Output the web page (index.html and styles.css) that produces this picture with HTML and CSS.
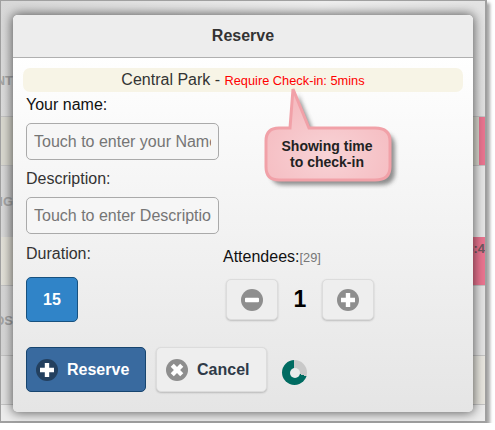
FILE: index.html
```html
<!DOCTYPE html>
<html lang="en">
<head>
  <meta charset="UTF-8">
  <meta name="viewport" content="width=device-width, initial-scale=1.0">
  <title>Reserve</title>
  <link rel="stylesheet" href="styles.css">
</head>
<body>
  <div class="screen">
    <div class="backdrop">
      <div class="band band-top"><span class="band-left">NT</span></div>
      <div class="band band-cream"><span class="band-left"></span><span class="band-pink"></span></div>
      <div class="band band-photo"><span class="band-left">NG</span></div>
      <div class="band band-time"><span class="band-left"></span><span class="band-pink">5:4</span></div>
      <div class="band band-photo-low"><span class="band-left">OS</span></div>
      <div class="band band-cream-low"></div>
      <div class="band band-foot"></div>
    </div>

    <div class="dialog">
      <header class="dialog-title">Reserve</header>
      <div class="dialog-body">
        <div class="banner">Central Park - <span class="banner-note">Require Check-in: 5mins</span></div>

        <label class="field-label label-name" for="name">Your name:</label>
        <input class="text-input" id="name" type="text" placeholder="Touch to enter your Name">
        <label class="field-label" for="description">Description:</label>
        <input class="text-input" id="description" type="text" placeholder="Touch to enter Description">

        <div class="options">
          <div class="option-duration">
            <div class="field-label">Duration:</div>
            <button class="duration-btn" type="button">15</button>
          </div>
          <div class="option-attendees">
            <div class="field-label attendees-label">Attendees:<span class="attendees-max">[29]</span></div>
            <div class="stepper">
              <button class="step-btn" type="button">
                <svg class="icon" viewBox="0 0 22 22"><circle cx="11" cy="11" r="11" fill="#8e8e8e"/><rect x="4" y="8.800" width="14" height="4.400" rx="1" fill="#fff"/></svg>
              </button>
              <span class="step-value">1</span>
              <button class="step-btn" type="button">
                <svg class="icon" viewBox="0 0 22 22"><circle cx="11" cy="11" r="11" fill="#8e8e8e"/><path d="M8.800 4h4.400v4.800H18v4.400h-4.800V18H8.800v-4.800H4V8.800h4.800z" fill="#fff"/></svg>
              </button>
            </div>
          </div>
        </div>

        <div class="actions">
          <button class="action-btn action-primary" type="button">
            <svg class="icon" viewBox="0 0 22 22"><circle cx="11" cy="11" r="11" fill="#23405f"/><path d="M8.800 4h4.400v4.800H18v4.400h-4.800V18H8.800v-4.800H4V8.800h4.800z" fill="#fff"/></svg>
            Reserve
          </button>
          <button class="action-btn action-cancel" type="button">
            <svg class="icon" viewBox="0 0 22 22"><circle cx="11" cy="11" r="11" fill="#8e8e8e"/><path d="M7.800 4.700 11 7.900l3.200-3.200 3.100 3.100-3.200 3.200 3.200 3.200-3.100 3.100-3.200-3.200-3.200 3.200-3.100-3.100 3.200-3.200-3.200-3.200z" fill="#fff"/></svg>
            Cancel
          </button>
          <div class="spinner"></div>
        </div>
      </div>
    </div>

    <div class="callout">
      <svg class="callout-shape" viewBox="0 0 135 102">
        <defs>
          <radialGradient id="calloutFill" cx="0.5" cy="0.72" r="0.6">
            <stop offset="0" stop-color="#f8d3d6"/>
            <stop offset="1" stop-color="#f5bcc1"/>
          </radialGradient>
          <filter id="calloutBlur"><feGaussianBlur stdDeviation="2"/></filter>
        </defs>
        <path d="M29 2 L45 41 H111 Q126 41 126 54 V80 Q126 93 111 93 H15 Q2 93 2 80 V54 Q2 41 15 41 H26 Z" fill="#4a4a4a" opacity="0.6" transform="translate(5 5)" filter="url(#calloutBlur)"/>
        <path d="M29 2 L45 41 H111 Q126 41 126 54 V80 Q126 93 111 93 H15 Q2 93 2 80 V54 Q2 41 15 41 H26 Z" fill="url(#calloutFill)" stroke="#f1a1a8" stroke-width="3"/>
      </svg>
      <div class="callout-text">Showing time<br>to check-in</div>
    </div>
  </div>
</body>
</html>
```

FILE: styles.css
```css
body {
  margin: 0;
  background-color: #fff;
  font-family: "Liberation Sans", Arial, sans-serif;
  font-size: 16px;
  color: #222;
}
button {
  font-family: inherit;
  cursor: pointer;
}

/* the page that sits dimmed behind the dialog */
.screen {
  position: relative;
  box-sizing: border-box;
  width: 487px;
  height: 423px;
  padding: 14px 0 0 12px;
  border: 1px solid #a0a0a0;
  border-width: 1px 2px 2px 1px;
  background-color: #e4e4e4;
  box-shadow: 3px 3px 3px rgba(0, 0, 0, 0.35);
}
.backdrop {
  position: absolute;
  inset: 0;
  display: flex;
  flex-direction: column;
  overflow: hidden;
}
.band {
  display: flex;
  justify-content: space-between;
  border-bottom: 1px solid #c4c4c4;
  box-sizing: border-box;
}
.band-left {
  width: 12px;
  overflow: hidden;
  direction: rtl;
  font-size: 13px;
  font-weight: bold;
  color: #a5a5a5;
  white-space: nowrap;
}
.band-pink {
  width: 6px;
  background-color: #ea7590;
  font-size: 13px;
  font-weight: bold;
  color: #6e5a60;
  overflow: hidden;
  direction: rtl;
  white-space: nowrap;
}
.band-top {
  height: 116px;
  align-items: flex-end;
  padding-bottom: 28px;
  background: linear-gradient(115deg, #d8d8d8, #eeeeee 60%, #e0e0e0);
}
.band-top .band-left {
  line-height: 15px;
}
.band-cream {
  height: 49px;
  background-color: #d9d8cf;
}
.band-photo {
  height: 71px;
  align-items: center;
  border-bottom: none;
  background: linear-gradient(90deg, #dadada, #c8c8c8 14px, #e6e6e6 14px);
}
.band-time {
  height: 49px;
  background: linear-gradient(90deg, #e2e0d8, #dedcd3 14px);
}
.band-time .band-pink {
  width: 13px;
  line-height: 24px;
}
.band-photo-low {
  height: 70px;
  align-items: center;
  background: linear-gradient(90deg, #d4d4d4, #e8e8e8 14px, #e4e4e4 14px);
}
.band-cream-low {
  height: 49px;
  background: linear-gradient(90deg, #e0e0e0, #e8e6df);
}
.band-foot {
  flex: 1;
  border-bottom: none;
  background-color: #ececec;
}

.dialog {
  position: relative;
  box-sizing: border-box;
  width: 460px;
  height: 397px;
  border-radius: 5px;
  background: linear-gradient(180deg, #ffffff 10%, #e5e5e5 100%);
  box-shadow: 0 0 11px 1px rgba(0, 0, 0, 0.6);
  overflow: hidden;
}
.dialog-title {
  box-sizing: border-box;
  height: 43px;
  line-height: 41px;
  border-bottom: 1px solid #b0b0b0;
  background-color: #ededed;
  text-align: center;
  font-weight: bold;
  color: #333;
}
.dialog-body {
  padding: 10px 10px 0;
}
.banner {
  height: 24px;
  line-height: 24px;
  border-radius: 7px;
  background-color: #f7f4e6;
  text-align: center;
  color: #333;
}
.banner-note {
  font-size: 12.8px;
  color: #f00;
}
.field-label {
  display: block;
  line-height: 20px;
  margin-left: 3px;
  color: #333;
}
.label-name {
  margin-top: 3px;
  color: #111;
}
.text-input {
  display: block;
  box-sizing: border-box;
  width: 193px;
  height: 37px;
  margin: 8px 0 0 3px;
  padding: 0 7px;
  border: 1px solid #aaa;
  border-radius: 5px;
  background-color: #f6f6f6;
  font-family: inherit;
  font-size: 16px;
}
.text-input + .field-label {
  margin-top: 9px;
}
.text-input::placeholder {
  color: #757575;
  opacity: 1;
}

.options {
  display: flex;
  margin-top: 10px;
}
.option-duration {
  width: 200px;
}
.duration-btn {
  display: block;
  width: 52px;
  height: 45px;
  margin: 13px 0 0 3px;
  border: 1px solid #17517f;
  border-radius: 5px;
  background-color: #3084c8;
  color: #fff;
  font-size: 16px;
  font-weight: bold;
}
.attendees-label {
  margin: 3px 0 0 0;
  color: #111;
}
.attendees-max {
  font-size: 12.8px;
  color: #777;
}
.stepper {
  display: flex;
  align-items: center;
  margin: 11px 0 0 3px;
}
.step-btn {
  display: flex;
  align-items: center;
  justify-content: center;
  width: 52px;
  height: 41px;
  padding: 0;
  border: 1px solid #dcdcdc;
  border-radius: 5px;
  background-color: #eeeeee;
  box-shadow: 0 1px 2px rgba(0, 0, 0, 0.2);
}
.step-value {
  width: 44px;
  text-align: center;
  font-size: 23px;
  font-weight: bold;
  color: #000;
}
.icon {
  display: block;
  flex: none;
  width: 22px;
  height: 22px;
}

.actions {
  display: flex;
  align-items: center;
  margin: 25px 0 0 3px;
}
.action-btn {
  display: flex;
  align-items: center;
  height: 45px;
  padding: 0 0 0 9px;
  border-radius: 5px;
  font-size: 16px;
  font-weight: bold;
}
.action-primary {
  width: 120px;
  gap: 9px;
  border: 1px solid #17456f;
  background-color: #396a9f;
  color: #fff;
}
.action-cancel {
  width: 111px;
  gap: 9px;
  margin-left: 10px;
  border: 1px solid #dcdcdc;
  background-color: #eeeeee;
  color: #2e3a48;
  box-shadow: 0 1px 2px rgba(0, 0, 0, 0.2);
}
.spinner {
  position: relative;
  width: 25px;
  height: 25px;
  margin: 5px 0 0 15px;
  border-radius: 50%;
  background: conic-gradient(#c9c9c9 0 108deg, #006b61 108deg 360deg);
}
.spinner::after {
  content: "";
  position: absolute;
  top: 8px;
  left: 8px;
  width: 10px;
  height: 10px;
  border-radius: 50%;
  background-color: #ebebeb;
}

/* annotation drawn over the screenshot */
.callout {
  position: absolute;
  left: 263px;
  top: 86px;
  width: 135px;
  height: 102px;
}
.callout-shape {
  display: block;
  width: 135px;
  height: 102px;
}
.callout-text {
  position: absolute;
  left: -1px;
  top: 51px;
  width: 128px;
  text-align: center;
  font-size: 14px;
  font-weight: bold;
  line-height: 16px;
  color: #222;
}
```
